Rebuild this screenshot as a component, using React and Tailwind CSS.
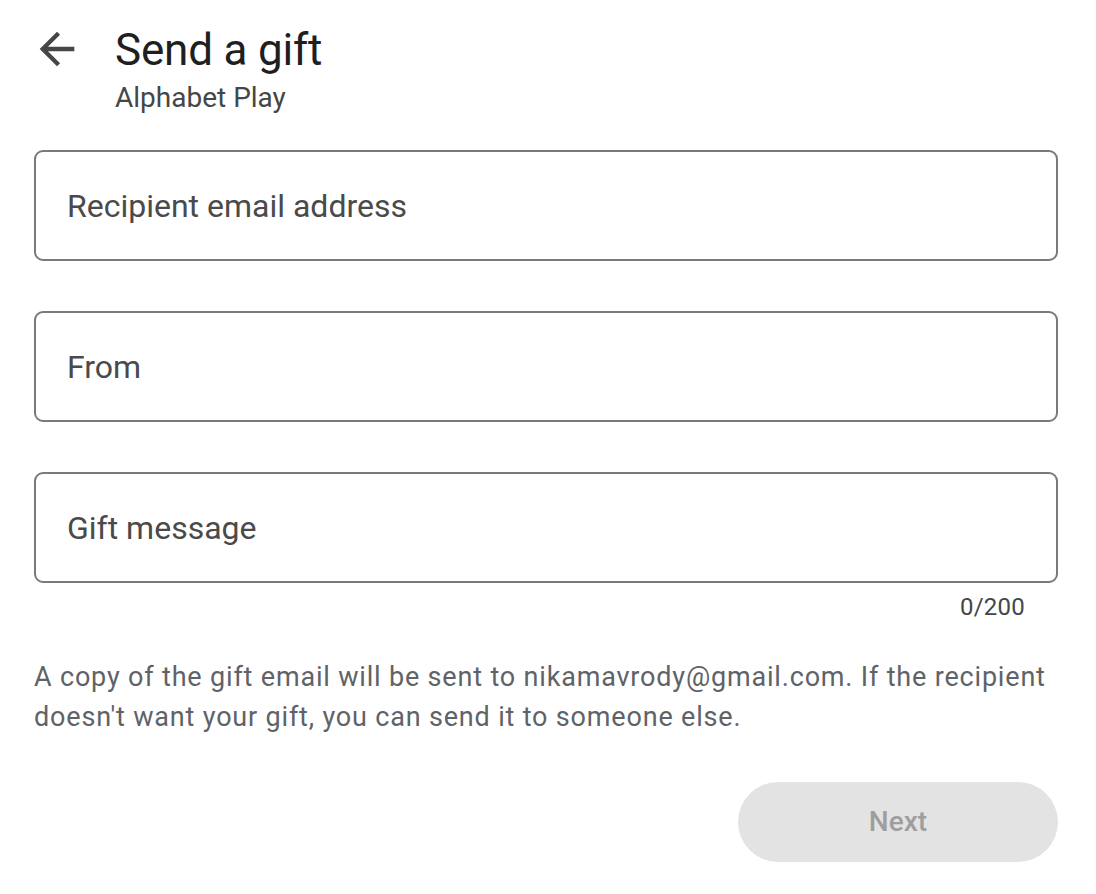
import React from "react";

const font = { fontFamily: "Roboto, 'Noto Sans', sans-serif" };

function Field({ label }) {
  return (
    <div className="h-[111px] w-full rounded-[9px] border-2 border-[#7a7a7a] flex items-center pl-[31px]">
      <span className="text-[32px] leading-[38px] text-[#4a4a4a]">{label}</span>
    </div>
  );
}

export default function App() {
  return (
    <div className="w-[1096px] h-[894px] bg-white overflow-hidden" style={font}>
      <div className="pl-[34px] pr-[38px] pt-[24px]">
        <div className="flex">
          <div className="w-[81px] shrink-0 relative">
            <svg
              viewBox="0 0 24 24"
              width="52"
              height="52"
              className="absolute left-[-3px] top-[-1px]"
              fill="#444746"
            >
              <path d="M20 11H7.83l5.59-5.59L12 4l-8 8 8 8 1.41-1.41L7.83 13H20v-2z" />
            </svg>
          </div>
          <div>
            <div className="text-[44px] leading-[52px] tracking-[-0.2px] text-[#1f1f1f]">Send a gift</div>
            <div className="mt-[4px] text-[28px] leading-[36px] text-[#444746]">Alphabet Play</div>
          </div>
        </div>

        <div className="mt-[34px] flex flex-col gap-[50px]">
          <Field label="Recipient email address" />
          <Field label="From" />
          <Field label="Gift message" />
        </div>
        <div className="mt-[10px] flex justify-end pr-[33px]">
          <span className="text-[24px] leading-[28px] tracking-[0.25px] text-[#444746]">0/200</span>
        </div>

        <p className="mt-[36px] text-[27px] leading-[40px] text-[#5f6368] tracking-[0.82px]">
          A copy of the gift email will be sent to nikamavrody@gmail.com. If the recipient doesn't want your gift, you can send it to someone else.
        </p>

        <div className="mt-[45px] flex justify-end">
          <button className="w-[320px] h-[80px] rounded-full bg-[#e3e3e3] text-[28px] font-medium text-[#9e9e9e]">
            Next
          </button>
        </div>
      </div>
    </div>
  );
}
